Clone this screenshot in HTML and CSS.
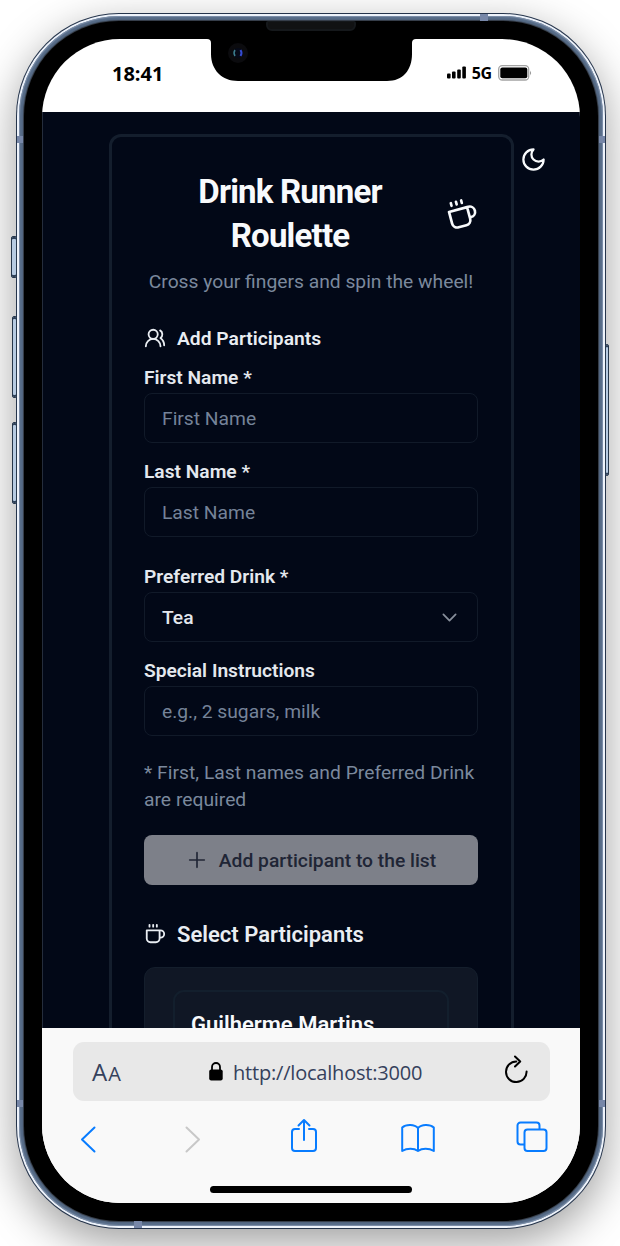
FILE: index.html
```
<!DOCTYPE html>
<html lang="en">
<head>
<meta charset="utf-8">
<title>Drink Runner Roulette</title>
<link rel="stylesheet" href="styles.css">
</head>
<body>
<div class="phone">
  <i class="key key-mute"></i><i class="key key-up"></i><i class="key key-down"></i><i class="key key-power"></i>
  <i class="band band-tl"></i><i class="band band-tr"></i><i class="band band-bl"></i><i class="band band-br"></i><i class="band-h band-top"></i><i class="band-h band-bottom"></i>
  <div class="rim"><div class="metal"><div class="bezel">
    <i class="speaker"></i>
    <div class="screen">
      <header class="status">
        <svg class="notch" width="209" height="42" viewBox="0 0 209 42"><path d="M0 0H209Q205 0 205 4V15C205 31 196 42 180 42H31C15 42 4 31 4 15V4Q4 0 0 0Z"/><circle cx="31" cy="14" r="10" fill="#0b0b0e"/><circle cx="31" cy="14" r="5" fill="#060a18"/><path d="M28 11q-2 3 0 6" fill="none" stroke="#3d7f8e" stroke-width="1.5"/><path d="M33.5 11q2 3 0 6" fill="none" stroke="#354bd0" stroke-width="2"/></svg>
        <span class="time">18:41</span>
        <div class="signal">
          <svg width="20" height="13" viewBox="0 0 20 13"><rect x="0" y="7.500" width="3.600" height="5" rx="1"/><rect x="5" y="5.500" width="3.600" height="7" rx="1"/><rect x="10.200" y="3.500" width="3.600" height="9" rx="1"/><rect x="15.300" y="0.500" width="3.600" height="12" rx="1"/></svg>
          <span class="net">5G</span>
          <svg width="34" height="16" viewBox="0 0 34 16"><rect x=".7" y=".7" width="30" height="14.300" rx="3.500" fill="none" stroke="#a3a3a3" stroke-width="1.300"/><rect x="2.300" y="2.500" width="27" height="10.700" rx="2"/><path d="M32.200 5.500Q34 8 32.200 10.500Z" fill="#777"/></svg>
        </div>
      </header>
      <main class="app">
        <svg class="moon" viewBox="0 0 24 24"><path d="M12 3a6 6 0 0 0 9 9 9 9 0 1 1-9-9Z"/></svg>
        <section class="card">
          <div class="title-row">
            <h1>Drink Runner Roulette</h1>
            <svg class="cup cup-title" viewBox="0 0 24 24"><path d="M17 8h1a4 4 0 1 1 0 8h-1M3 8h14v9a4 4 0 0 1-4 4H7a4 4 0 0 1-4-4ZM6 2v2M10 2v2M14 2v2"/></svg>
          </div>
          <p class="lead">Cross your fingers and spin the wheel!</p>
          <h2 class="heading small"><svg viewBox="0 0 24 24"><path d="M18 21a8 8 0 0 0-16 0"/><circle cx="10" cy="8" r="5"/><path d="M22 20c0-3.370-2-6.500-4-8a5 5 0 0 0-.450-8.300"/></svg><span>Add Participants</span></h2>
          <div class="field"><label>First Name *</label><div class="input">First Name</div></div>
          <div class="field"><label>Last Name *</label><div class="input">Last Name</div></div>
          <div class="field apart"><label>Preferred Drink *</label><div class="input select"><span>Tea</span><svg viewBox="0 0 24 24"><path d="m5 8.500 7 7 7-7"/></svg></div></div>
          <div class="field"><label>Special Instructions</label><div class="input">e.g., 2 sugars, milk</div></div>
          <p class="note">* First, Last names and Preferred Drink are required</p>
          <div class="button"><svg viewBox="0 0 24 24"><path d="M4 12h16M12 4v16"/></svg><span>Add participant to the list</span></div>
          <h2 class="heading large"><svg viewBox="0 0 24 24"><path d="M17 8h1a4 4 0 1 1 0 8h-1M3 8h14v9a4 4 0 0 1-4 4H7a4 4 0 0 1-4-4ZM6 2v2M10 2v2M14 2v2"/></svg><span>Select Participants</span></h2>
          <div class="list"><div class="person">Guilherme Martins</div></div>
        </section>
      </main>
      <footer class="browser">
        <div class="address">
          <span class="aa">A<small>A</small></span>
          <span class="url"><svg width="14" height="19" viewBox="0 0 14 19"><path d="M3 9V5a4 4 0 0 1 8 0v4" fill="none" stroke="#000" stroke-width="1.800"/><rect x=".2" y="7.500" width="13.500" height="11" rx="2"/></svg><b>http://localhost:3000</b></span>
          <svg class="reload" width="26" height="30" viewBox="0 0 26 30"><path d="M13.300 6.500A10.300 10.300 0 1 0 23.600 16.500M12 1.500l5.200 5-5.200 5"/></svg>
        </div>
        <nav class="tools">
          <svg width="16" height="28" viewBox="0 0 16 28"><path d="M14.500 2.500 2 14.500l12.500 12"/></svg>
          <svg class="off" width="16" height="28" viewBox="0 0 16 28"><path d="M1.500 2.500 14 14.500 1.500 26.500"/></svg>
          <svg width="28" height="35" viewBox="0 0 28 35"><path d="M9 11H5a3 3 0 0 0-3 3v16a3 3 0 0 0 3 3h18a3 3 0 0 0 3-3V14a3 3 0 0 0-3-3h-4M14 22V2M8.500 7.500 14 2l5.500 5.500"/></svg>
          <svg width="34" height="30" viewBox="0 0 34 30"><path d="M17 5C13.500 1 5 1 1.200 4.500V28C6 25 13 25 17 28C21 25 28 25 32.800 28V4.500C29 1 20.500 1 17 5V28"/></svg>
          <svg width="32" height="32" viewBox="0 0 32 32"><rect x="8.500" y="8.500" width="22" height="21.500" rx="3"/><path d="M8 23.500H4.500a3 3 0 0 1-3-3v-16a3 3 0 0 1 3-3h16a3 3 0 0 1 3 3V8"/></svg>
        </nav>
        <i class="home"></i>
      </footer>
    </div>
  </div></div></div>
</div>
</body>
</html>
```
FILE: styles.css
```
* { box-sizing: border-box; }
body { margin: 0; height: 1246px; overflow: hidden; background: #fff; padding: 13px 14px 0 16px; font-family: Roboto, "Liberation Sans", sans-serif; }
svg { display: block; flex: none; }
h1, h2, p { margin: 0; }

.phone { position: relative; width: 590px; height: 1216px; border-radius: 103px; background: #25344b; padding: 1px; box-shadow: 0 14px 44px rgba(0,0,0,.38); }
.rim { height: 100%; border-radius: 102px; background: #eef3fb; padding: 2px; }
.metal { height: 100%; border-radius: 100px; background: #566b87; padding: 5px; box-shadow: inset 0 0 1px 1px #7f91ab; }
.bezel { position: relative; height: 100%; border-radius: 95px; background: #000; padding: 18px; box-shadow: 0 0 1px 1px #333a44; }
.screen { height: 1164px; width: 538px; border-radius: 78px; overflow: hidden; background: #fff; display: flex; flex-direction: column; }

.key { position: absolute; border: 1px solid #26374c; border-radius: 2px; background: #b7cbe2; box-shadow: inset 0 2px #304259, inset 0 -2px #304259; width: 5px; left: -4px; }
.key-mute { left: -5px; width: 6px; top: 223px; height: 42px; }
.key-up { top: 303px; height: 82px; }
.key-down { top: 409px; height: 82px; }
.key-power { left: 589px; width: 4px; top: 331px; height: 132px; }
.band { position: absolute; z-index: 1; width: 6px; height: 7px; background: #7787a8; }
.band-tl { left: 1px; top: 123px; } .band-tr { left: 583px; top: 123px; }
.band-bl { left: 1px; top: 1087px; } .band-br { left: 583px; top: 1087px; }
.band-h { position: absolute; z-index: 1; width: 8px; height: 7px; background: #7787a8; }
.band-top { left: 464px; top: 1px; } .band-bottom { left: 118px; top: 1208px; }
.speaker { position: absolute; left: 242px; top: 0; width: 90px; height: 10px; border: 2px solid #15181b; border-top-width: 1px; border-radius: 2px 2px 6px 6px; background: #111213; }

.status { position: relative; height: 73px; flex: none; display: flex; justify-content: space-between; padding: 21px 49px 0 70px; color: #000; font-family: "Open Sans", "Noto Sans", sans-serif; }
.notch { position: absolute; left: 165px; top: 0; }
.time { font-size: 20px; font-weight: 700; line-height: 27px; }
.signal { display: flex; align-items: center; height: 25px; margin-right: -1px; }
.net { font-size: 16px; font-weight: 700; line-height: 25px; margin: 1px 6px 0 5px; letter-spacing: -.2px; }

.app { position: relative; height: 916px; flex: none; overflow: hidden; background: #020817; border-left: 1px solid #252d3c; padding: 22px 67px 0 66px; color: #f8fafc; }
.app svg { fill: none; stroke: currentColor; stroke-width: 2; stroke-linecap: round; stroke-linejoin: round; }
.app .moon { position: absolute; left: 477px; top: 34px; width: 27px; height: 27px; }
.card { height: 1100px; width: 405px; border: 3px solid #141e2d; border-radius: 12px; padding: 33px 33px 33px 32px; font-size: 19.250px; }
.title-row { display: flex; align-items: center; justify-content: space-between; height: 88px; }
h1 { width: 292px; text-align: center; font-size: 33px; line-height: 44px; font-weight: 700; letter-spacing: -.8px; }
.cup-title { width: 32px; height: 32px; transform: rotate(-15deg); }
.lead { margin-top: 10px; line-height: 28px; text-align: center; white-space: nowrap; color: #7b899d; }
.heading { display: flex; align-items: center; height: 28px; gap: 11px; font-weight: 500; color: #e9edf2; }
.heading svg { width: 22px; height: 22px; stroke-width: 2; }
.small { margin-top: 28px; font-size: 19.250px; font-weight: 600; }
.large { margin-top: 35px; font-size: 22px; font-weight: 600; }
.field { margin-top: 18px; }
.small + .field { margin-top: 15px; }
.apart { margin-top: 29px; }
label { display: block; height: 20px; line-height: 22px; margin-bottom: 6px; font-weight: 600; font-size: 19.200px; color: #e4e8ee; }
.input { height: 50px; border: 1px solid #111a29; border-radius: 8px; padding: 0 17px; line-height: 50px; color: #758399; }
.select { display: flex; align-items: center; justify-content: space-between; color: #e3e7ed; font-weight: 500; line-height: 47px; }
.select svg { width: 21px; height: 21px; color: #888f9b; }
.note { margin-top: 23px; line-height: 27px; color: #7b899d; width: 336px; letter-spacing: .02px; }
.button { margin-top: 22px; height: 50px; border-radius: 8px; background: #7d8089; color: #202535; font-weight: 500; display: flex; align-items: center; justify-content: center; gap: 11px; }
.button svg { width: 22px; height: 22px; stroke-width: 1.800; }
.list { margin-top: 19px; height: 300px; border-radius: 11px; background: #101725; border: 1px solid #141e2c; padding: 22px 28px; }
.person { height: 200px; border: 2px solid #131f2d; border-radius: 11px; padding: 19px 16px; font-size: 22px; line-height: 28px; font-weight: 600; }

.browser { flex: 1; background: #f9f9f9; padding: 14px 30px 0 31px; display: flex; flex-direction: column; align-items: stretch; font-family: "Open Sans", "Noto Sans", sans-serif; color: #35415c; }
.address { height: 59px; border-radius: 11px; background: #e8e8e8; display: flex; align-items: center; padding: 0 21px 0 19px; }
.aa { font-size: 24px; font-weight: 400; width: 117px; flex: none; }
.aa small { font-size: 20px; margin-left: 1px; }
.url { flex: 1; display: flex; align-items: center; gap: 10px; }
.url b { font-size: 20px; font-weight: 400; white-space: nowrap; letter-spacing: -.2px; padding-top: 1px; }
.reload, .tools svg { fill: none; stroke: #000; stroke-width: 2; stroke-linecap: round; stroke-linejoin: round; }
.reload { margin-bottom: 3px; }
.tools { display: grid; grid-template-columns: 104px 106px 115px 114px 114px; justify-items: center; align-items: end; height: 35px; margin: 17px -39px 0 -37px; }
.tools svg { stroke: #087cff; }
.tools .off { stroke: #c8c8c8; }
.home { width: 202px; height: 7px; border-radius: 4px; background: #000; margin: 33px 0 0 137px; }
```
